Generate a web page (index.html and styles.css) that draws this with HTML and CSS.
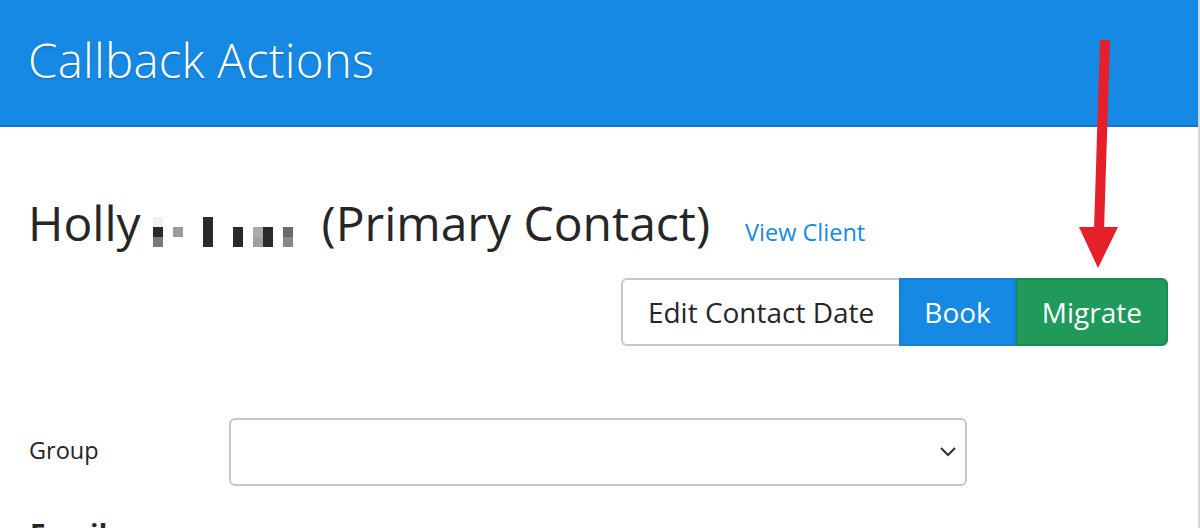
FILE: index.html
```html
<!DOCTYPE html>
<html>
<head>
<meta charset="utf-8">
<link rel="stylesheet" href="styles.css">
</head>
<body>
<div class="frame">
  <header class="topbar">
    <h1 class="title">Callback Actions</h1>
  </header>
  <main class="content">
    <div class="contact-row">
      <h2 class="contact-name">Holly <svg class="redacted" width="140" height="30" viewBox="0 0 140 30"><rect x="0" y="0" width="10" height="10" fill="#f0f0f0"/><rect x="0" y="10" width="10" height="10" fill="#2a2a2a"/><rect x="0" y="20" width="10" height="10" fill="#7a7a7a"/><rect x="20" y="10" width="10" height="10" fill="#9a9a9a"/><rect x="50" y="0" width="10" height="30" fill="#2a2a2a"/><rect x="80" y="10" width="10" height="20" fill="#2a2a2a"/><rect x="100" y="10" width="10" height="10" fill="#ababab"/><rect x="100" y="20" width="10" height="10" fill="#a0a0a0"/><rect x="110" y="10" width="10" height="20" fill="#2a2a2a"/><rect x="130" y="10" width="10" height="10" fill="#6a6a6a"/><rect x="130" y="20" width="10" height="10" fill="#888888"/></svg> (Primary Contact)</h2>
      <a class="view-link" href="#">View Client</a>
    </div>
    <div class="actions">
      <div class="btn-group">
        <button class="btn btn-default">Edit Contact Date</button>
        <button class="btn btn-primary">Book</button>
        <button class="btn btn-success">Migrate</button>
      </div>
    </div>
    <div class="form-row">
      <label class="form-label">Group</label>
      <div class="select">
        <svg class="chevron" width="18" height="12" viewBox="0 0 18 12"><path d="M2 2 L9 9 L16 2" fill="none" stroke="#333" stroke-width="2.2"/></svg>
      </div>
    </div>
    <div class="section-title">Email</div>
  </main>
  <svg class="arrow" width="60" height="240" viewBox="0 0 60 240">
    <path d="M37 0 L31 190" stroke="#e5202a" stroke-width="10" fill="none"/>
    <path d="M11 187 L50 187 L30 228 Z" fill="#e5202a"/>
  </svg>
</div>
</body>
</html>
```

FILE: styles.css
```css
html, body {
  margin: 0;
  padding: 0;
  background: #ffffff;
}
body {
  font-family: "Open Sans", "Noto Sans", sans-serif;
  color: #262626;
  overflow: hidden;
}
.frame {
  position: relative;
  width: 1198px;
  height: 528px;
  border-right: 2px solid #d6d8d2;
  overflow: hidden;
}
.topbar {
  box-sizing: border-box;
  height: 127px;
  background: #1589e3;
  border-bottom: 2px solid #1377c9;
  display: flex;
  align-items: center;
  padding-left: 28px;
  padding-bottom: 6px;
}
.title {
  margin: 0;
  font-size: 47.5px;
  font-weight: 300;
  color: #ffffff;
  letter-spacing: 0.2px;
  text-shadow: 0 1px 2px rgba(0,0,0,0.2);
}
.content {
  padding: 0 30px;
}
.contact-row {
  display: flex;
  align-items: baseline;
  margin-top: 64px;
}
.contact-name {
  margin: 0;
  font-size: 48px;
  font-weight: 400;
  line-height: 64px;
  color: #262626;
  margin-left: -2px;
}
.redacted {
  vertical-align: -6px;
  margin: 0 16px 0 0;
}
.view-link {
  margin-left: 35px;
  font-size: 23.5px;
  color: #1589e3;
  text-decoration: none;
}
.actions {
  display: flex;
  justify-content: flex-end;
  margin-top: 23px;
}
.btn-group {
  display: flex;
}
.btn {
  font-family: "Open Sans", "Noto Sans", sans-serif;
  font-size: 28px;
  height: 68px;
  padding: 0 25px;
  border: 2px solid #c6c6c6;
  margin: 0;
  cursor: pointer;
}
.btn-default {
  background: #ffffff;
  color: #262626;
  border-radius: 6px 0 0 6px;
  border-right: none;
}
.btn-primary {
  background: #1589e3;
  border-color: #1480d6;
  color: #ffffff;
  padding: 0 23px 0 23px;
}
.btn-success {
  background: #1f9a5b;
  border-color: #1b8c51;
  color: #ffffff;
  border-radius: 0 6px 6px 0;
  padding: 0 24px;
}
.form-row {
  display: flex;
  align-items: center;
  margin-top: 72px;
}
.form-label {
  width: 199px;
  font-size: 23.5px;
  color: #262626;
  margin-left: -1px;
  padding-right: 1px;
  padding-bottom: 4px;
}
.select {
  box-sizing: border-box;
  width: 738px;
  height: 68px;
  border: 2px solid #c6c6c6;
  border-radius: 6px;
  display: flex;
  align-items: center;
  justify-content: flex-end;
  padding-right: 8px;
}
.section-title {
  margin-top: 29px;
  font-size: 28px;
  font-weight: 700;
}
.arrow {
  position: absolute;
  left: 1068px;
  top: 40px;
}
```
